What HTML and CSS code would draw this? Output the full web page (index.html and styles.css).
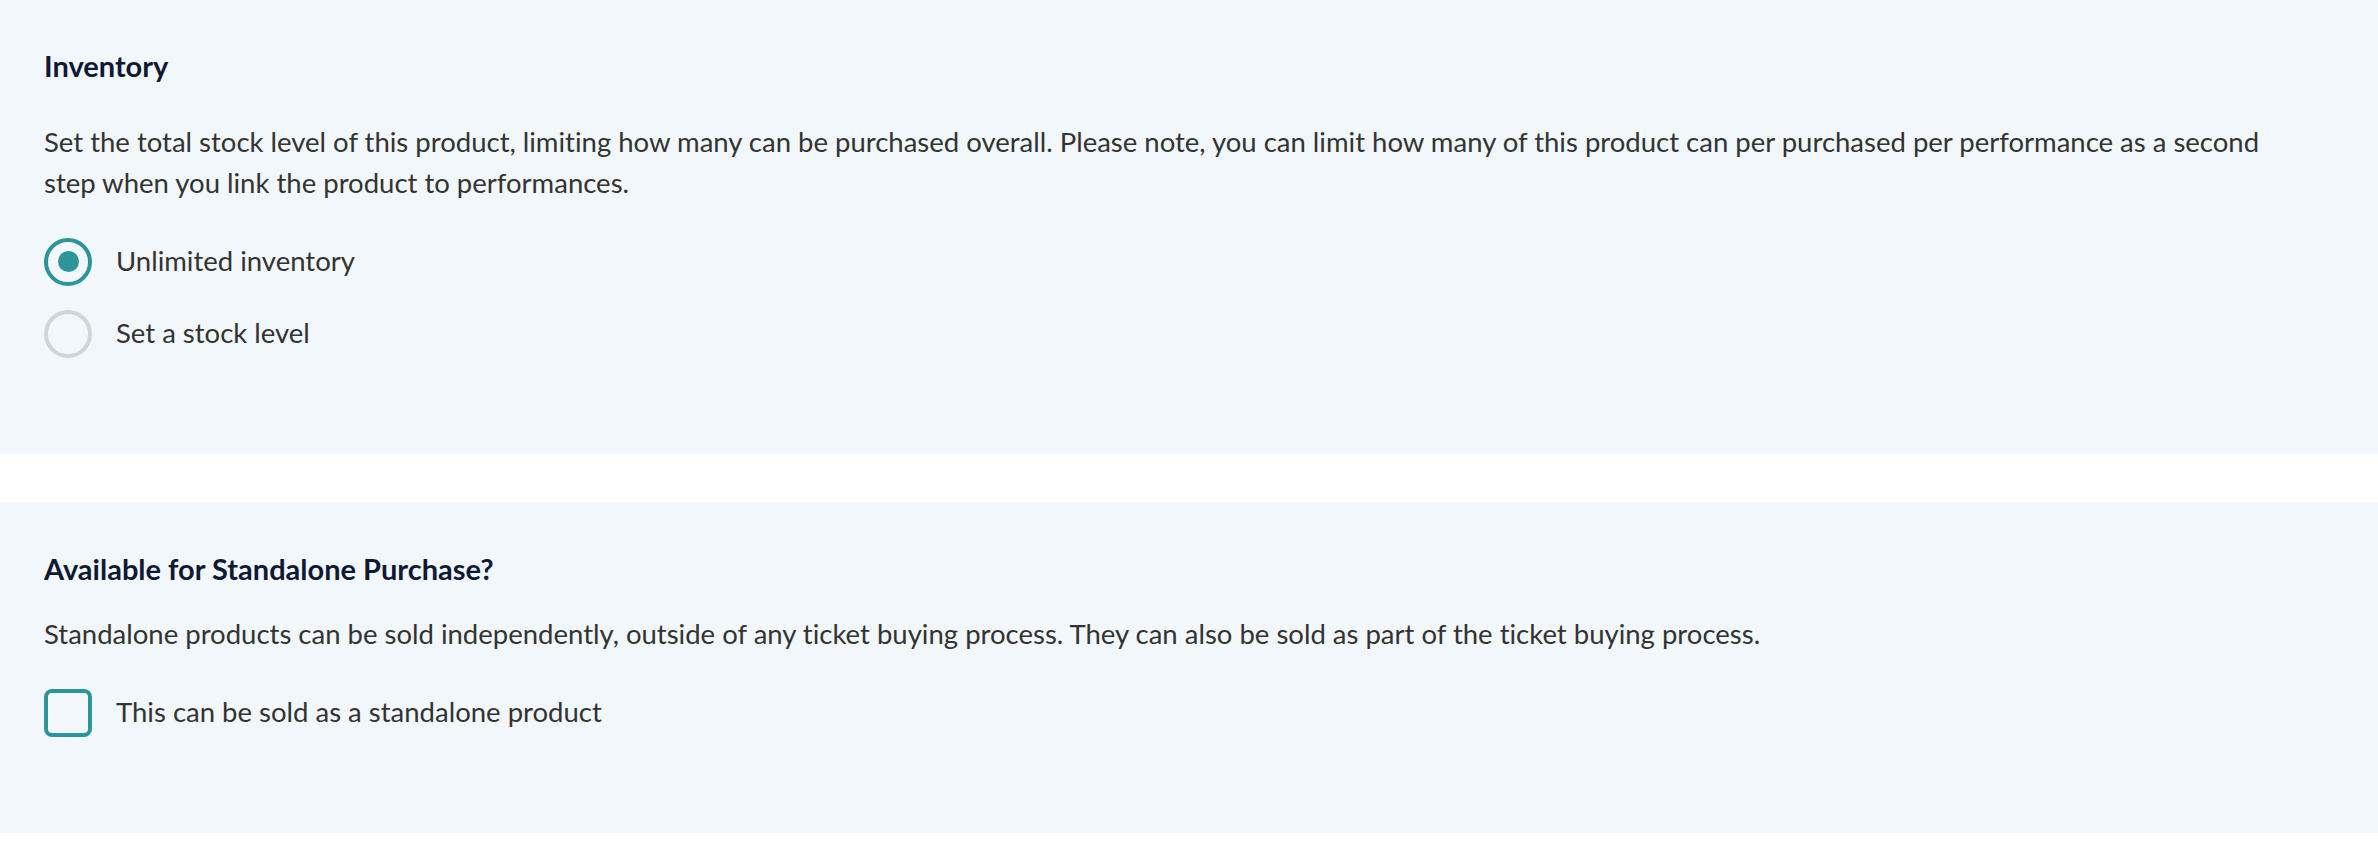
FILE: index.html
```html
<!DOCTYPE html>
<html lang="en">
<head>
<meta charset="utf-8">
<title>Product settings</title>
<link rel="stylesheet" href="styles.css">
</head>
<body>
<div class="page">
  <section class="panel">
    <h2 class="panel-title">Inventory</h2>
    <p class="panel-text panel-text--wide">Set the total stock level of this product, limiting how many can be purchased overall. Please note, you can limit how many of this product can per purchased per performance as a second step when you link the product to performances.</p>
    <div class="options">
      <label class="option">
        <span class="radio radio--checked"><span class="radio-dot"></span></span>
        <span class="option-label">Unlimited inventory</span>
      </label>
      <label class="option">
        <span class="radio"></span>
        <span class="option-label">Set a stock level</span>
      </label>
    </div>
  </section>
  <section class="panel">
    <h2 class="panel-title">Available for Standalone Purchase?</h2>
    <p class="panel-text panel-text--tight">Standalone products can be sold independently, outside of any ticket buying process. They can also be sold as part of the ticket buying process.</p>
    <div class="options">
      <label class="option">
        <span class="checkbox"></span>
        <span class="option-label">This can be sold as a standalone product</span>
      </label>
    </div>
  </section>
</div>
</body>
</html>
```

FILE: styles.css
```css
* { box-sizing: border-box; }

html, body {
  margin: 0;
  padding: 0;
  background: #ffffff;
}

body {
  font-family: Lato, "Open Sans", "Liberation Sans", sans-serif;
  font-size: 27.5px;
  line-height: 40.5px;
  color: #333333;
  font-variant-ligatures: none;
  font-feature-settings: "liga" 0, "clig" 0;
}

.page {
  display: flex;
  flex-direction: column;
  gap: 48px;
}

.panel {
  background: #f2f7fb;
  padding: 46px 80px 96px 44px;
}

.panel + .panel {
  padding-top: 47.5px;
}

.panel-title {
  margin: 0;
  font-size: 29px;
  line-height: 40.5px;
  font-weight: 700;
  color: #0e1a35;
}

.panel-text {
  margin: 0;
}

.panel-text--wide {
  margin-top: 35.5px;
}

.panel-text--tight {
  margin-top: 24px;
}

.options {
  margin-top: 34.5px;
  display: flex;
  flex-direction: column;
  gap: 24px;
}

.option {
  display: flex;
  align-items: center;
  gap: 24px;
  cursor: pointer;
}

.radio {
  width: 48px;
  height: 48px;
  flex: none;
  border-radius: 50%;
  border: 4px solid #d1d4d8;
  display: flex;
  align-items: center;
  justify-content: center;
}

.radio--checked {
  border: 4.5px solid #2b9599;
}

.radio-dot {
  width: 21px;
  height: 21px;
  border-radius: 50%;
  background: #2b9599;
}

.checkbox {
  width: 48px;
  height: 48px;
  flex: none;
  border: 4px solid #2b9599;
  border-radius: 8px;
}

.option-label {
  color: #333333;
}
```
